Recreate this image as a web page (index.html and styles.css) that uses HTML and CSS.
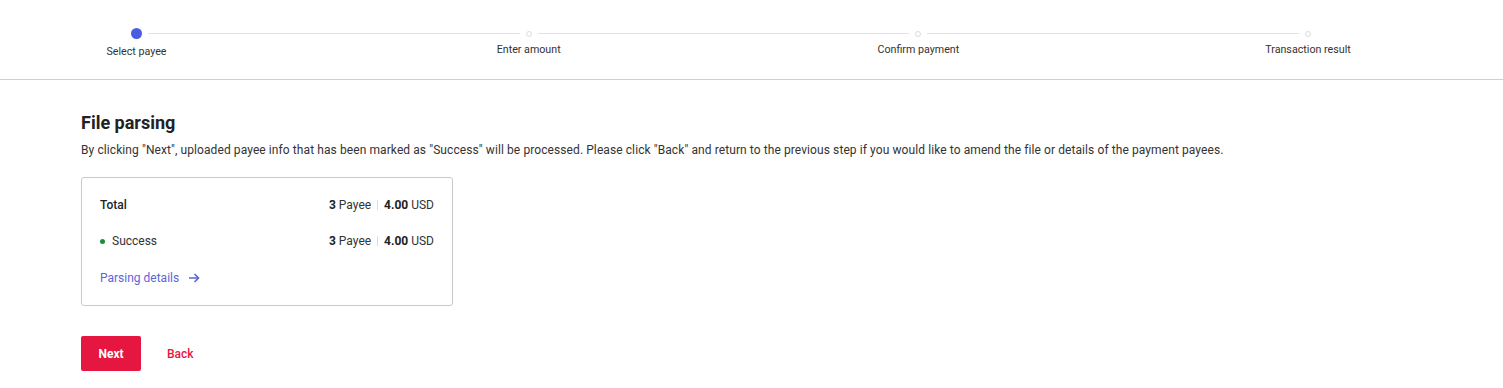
FILE: index.html
```html
<!DOCTYPE html>
<html lang="en">

<head>
    <meta charset="UTF-8">
    <title>File parsing</title>
    <link rel="stylesheet" href="styles.css">
</head>

<body>

    <div class="steps-bar">
        <div class="steps">
            <span class="dot active"></span>
            <span class="line"></span>
            <span class="dot"></span>
            <span class="line"></span>
            <span class="dot"></span>
            <span class="line"></span>
            <span class="dot"></span>

            <div class="step-label active"><span>Select payee</span></div>
            <div class="step-label col-3"><span>Enter amount</span></div>
            <div class="step-label col-5"><span>Confirm payment</span></div>
            <div class="step-label col-7"><span>Transaction result</span></div>
        </div>
    </div>

    <div class="content">
        <h2 class="title">File parsing</h2>
        <p class="desc">By clicking "Next", uploaded payee info that has been marked as "Success" will be processed. Please click "Back" and return to the previous step if you would like to amend the file or details of the payment payees.</p>

        <div class="summary">
            <div class="row">
                <div class="row-name strong">Total</div>
                <div class="row-value"><b>3</b> Payee <span class="sep"></span> <b>4.00</b> USD</div>
            </div>
            <div class="row">
                <div class="row-name"><span class="ok-dot"></span>Success</div>
                <div class="row-value"><b>3</b> Payee <span class="sep"></span> <b>4.00</b> USD</div>
            </div>
            <div class="row">
                <a class="details-link" href="#">Parsing details
                    <svg width="12" height="10" viewBox="0 0 12 10" fill="none" stroke="currentColor" stroke-width="1.6">
                        <path d="M1 5h9.5M6.5 1l4 4-4 4" />
                    </svg>
                </a>
            </div>
        </div>

        <div class="actions">
            <button class="btn-next">Next</button>
            <button class="btn-back">Back</button>
        </div>
    </div>

</body>

</html>
```

FILE: styles.css
```css
body {
    font-family: Roboto, "Liberation Sans", Arial, sans-serif;
    color: #333;
    background: #fff;
    margin: 0;
}

.steps-bar {
    height: 80px;
    box-sizing: border-box;
    padding: 28px 192px 0 131px;
    border-bottom: 1px solid #cfcfcf;
}

.steps {
    display: grid;
    grid-template-columns: 11px 1fr 6px 1fr 6px 1fr 6px;
    align-items: center;
}

.dot {
    width: 6px;
    height: 6px;
    box-sizing: border-box;
    border: 1px solid #dcdcdc;
    border-radius: 50%;
    justify-self: center;
}

.dot.active {
    width: 11px;
    height: 11px;
    border: none;
    background: #4a5de0;
}

.line {
    height: 1px;
    background: #e2e2e2;
    margin: 0 6px;
}

.step-label {
    grid-row: 2;
    display: flex;
    justify-content: center;
    white-space: nowrap;
    font-size: 10.7px;
    line-height: 16px;
    color: #333;
}

.step-label.active {
    grid-column: 1;
    margin-top: 5px;
}

.col-3 {
    grid-column: 3;
}

.col-5 {
    grid-column: 5;
}

.col-7 {
    grid-column: 7;
}

.content {
    padding: 31px 81px 0;
}

.title {
    font-size: 18px;
    line-height: 24px;
    font-weight: bold;
    color: #222;
    margin: 0 0 6px;
}

.desc {
    font-size: 12px;
    line-height: 18px;
    letter-spacing: 0.09px;
    margin: 0 0 18px;
}

.summary {
    width: 372px;
    box-sizing: border-box;
    border: 1px solid #c9c9c9;
    border-radius: 3px;
    padding: 17px 18px 17px 18px;
    display: flex;
    flex-direction: column;
    gap: 16px;
}

.row {
    display: flex;
    justify-content: space-between;
    align-items: center;
    font-size: 12px;
    line-height: 20px;
}

.row-name {
    display: flex;
    align-items: center;
}

.strong {
    font-weight: 500;
    color: #222;
}

.ok-dot {
    width: 5px;
    height: 5px;
    border-radius: 50%;
    background: #1a8f3a;
    margin-right: 7px;
}

.row-value b {
    font-weight: bold;
    color: #222;
}

.sep {
    display: inline-block;
    width: 1px;
    height: 10px;
    background: #ddd;
    margin: 0 3px;
    vertical-align: -1px;
}

.details-link {
    color: #5b67d8;
    text-decoration: none;
    display: flex;
    align-items: center;
    gap: 9px;
    margin-top: 1px;
}

.actions {
    margin-top: 30px;
    display: flex;
    align-items: center;
    gap: 26px;
}

.actions button {
    font-family: inherit;
    font-size: 12px;
    border: none;
    cursor: pointer;
}

.btn-next {
    width: 60px;
    height: 35px;
    border-radius: 2px;
    background: #e5163f;
    color: #fff;
    font-weight: bold;
}

.btn-back {
    background: none;
    padding: 0;
    color: #e5163f;
    font-weight: 500;
}
```
